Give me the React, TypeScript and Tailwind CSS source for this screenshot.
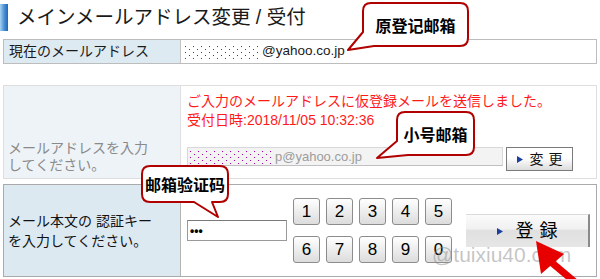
import React from "react";

const dotBg =
  "bg-[image:conic-gradient(from_270deg_at_1px_1px,#a800a8_90deg,transparent_0),conic-gradient(from_270deg_at_1px_1px,#a800a8_90deg,transparent_0)] bg-[size:8px_6px] bg-[position:1px_1px,5px_4px]";

function Tri() {
  return (
    <svg width="6" height="7" viewBox="0 0 6 7" className="shrink-0">
      <path d="M0 0 L6 3.5 L0 7 Z" fill="#1a3fa0" />
    </svg>
  );
}

export default function App() {
  const keys = ["1", "2", "3", "4", "5", "6", "7", "8", "9", "0"];
  return (
    <div className="relative w-[600px] h-[279px] overflow-hidden bg-white text-[#222] font-['Liberation_Sans','Noto_Sans_CJK_JP',sans-serif]">
      {/* Title */}
      <div className="flex items-center h-[34px]">
        <div className="w-[8px] h-[27px] mt-[1px] bg-linear-to-r from-[#a8d2f2] via-[#4a94d8] to-[#1f66b8]" />
        <h1 className="ml-[9px] mt-[2px] text-[19.5px] leading-none text-[#1a1a1a] font-normal">
          メインメールアドレス変更 / 受付
        </h1>
      </div>

      {/* Row 1 */}
      <div className="mx-[3px] mt-[5px] h-[25px] flex border border-[#bdbdbd]">
        <div className="w-[177px] bg-[#deeaf1] border-r border-[#c4c4c4] flex items-center pl-[5px] text-[14px] text-[#1a1a1a]">
          現在のメールアドレス
        </div>
        <div className="flex-1 flex items-center pl-[3px]">
          <div className={`w-[74px] h-[14px] ${dotBg}`} />
          <span className="ml-[4px] text-[13.5px] text-[#1a1a1a]">@yahoo.co.jp</span>
        </div>
      </div>

      {/* Row 2 */}
      <div className="mx-[3px] mt-[21px] h-[94px] flex border border-[#dedede]">
        <div className="w-[177px] bg-[#eef3f7] border-r border-[#e0e0e0] pl-[4px] pt-[54px] text-[14px] leading-[17px] text-[#8a8a8a]">
          <div>メールアドレスを入力</div>
          <div>してください。</div>
        </div>
        <div className="flex-1 pl-[6px] pt-[6px]">
          <div className="text-[14px] leading-[19px] text-[#ff1a1a]">
            <div>ご入力のメールアドレスに仮登録メールを送信しました。</div>
            <div>受付日時:2018/11/05 10:32:36</div>
          </div>
          <div className="flex items-start mt-[17px]">
            <div className="w-[316px] h-[19px] bg-[#f3f3f3] border border-[#d8d8d8] border-b-[#c0c0c0] flex items-center pl-[1px]">
              <div className={`w-[84px] h-[14px] ${dotBg}`} />
              <span className="ml-[2px] text-[13px] text-[#9c9c9c]">p@yahoo.co.jp</span>
            </div>
            <button className="ml-[3px] w-[67px] h-[24px] border border-[#7a7a7a] bg-linear-to-b from-white from-45% to-[#dcdcdc] flex items-center justify-center gap-[5px] text-[14px] text-[#111]">
              <Tri />
              <span className="ml-[2px]">変</span>
              <span>更</span>
            </button>
          </div>
        </div>
      </div>

      {/* Row 3 */}
      <div className="mx-[3px] mt-[5px] h-[93px] flex border border-[#aaaaaa]">
        <div className="w-[177px] bg-[#dde9f1] border-r border-[#b4b4b4] flex items-center pl-[4px] text-[14px] leading-[20px] text-[#111]">
          <div>
            <div>メール本文の 認証キー</div>
            <div>を入力してください。</div>
          </div>
        </div>
        <div className="flex-1 flex items-center pl-[6px]">
          <div className="w-[100px] h-[21px] border border-[#9a9a9a] border-t-[#7a7a7a] bg-white flex items-center pl-[2px] text-[12px] font-bold tracking-[0px] text-black font-['Liberation_Sans',sans-serif]">
            •••
          </div>
          <div className="ml-[6px] grid grid-cols-5 gap-x-[6px] gap-y-[11px]">
            {keys.map((k) => (
              <button
                key={k}
                className="w-[27px] h-[27px] border border-[#8c8c8c] rounded-[3px] bg-linear-to-b from-white to-[#dcdcdc] flex items-center justify-center text-[17px] text-black"
              >
                {k}
              </button>
            ))}
          </div>
          <button className="ml-[14px] w-[124px] h-[33px] border-t border-[#dadada] border-r-2 border-r-[#8a8a8a] bg-[linear-gradient(to_bottom,#fbfbfb_0%,#f0f0f0_45%,#e0e0e0_46%,#e6e6e6_100%)] flex items-center justify-center gap-[6px] text-[18px] text-black">
            <Tri />
            <span className="ml-[7px]">登</span>
            <span>録</span>
          </button>
        </div>
      </div>

      {/* Watermark */}
      <div className="absolute left-[432px] top-[244px] text-[21px] leading-none text-[rgba(140,140,140,0.5)] font-['Liberation_Sans',sans-serif]">
        @tuixiu40.com
      </div>

      {/* Overlay drawings: callouts and arrow */}
      <svg
        className="absolute inset-0 pointer-events-none"
        width="600"
        height="279"
        viewBox="0 0 600 279"
      >
        <path
          d="M371 3 H460 Q468 3 468 11 V38 Q468 46 460 46 H374 L348 50 L363 32 V11 Q363 3 371 3 Z"
          fill="white"
          stroke="#b00000"
          strokeWidth="2"
          strokeLinejoin="round"
        />
        <path
          d="M405 112 H466 Q474 112 474 120 V147 Q474 155 466 155 H408 L377 158 L397 141 V120 Q397 112 405 112 Z"
          fill="white"
          stroke="#b00000"
          strokeWidth="2"
          strokeLinejoin="round"
        />
        <path
          d="M150 166 H220 Q228 166 228 174 V194 Q228 202 220 202 H212 L218 217 L194 202 H150 Q142 202 142 194 V174 Q142 166 150 166 Z"
          fill="white"
          stroke="#b00000"
          strokeWidth="2"
          strokeLinejoin="round"
        />
        <line x1="551" y1="262" x2="582" y2="288" stroke="#e60000" strokeWidth="7" />
        <path d="M536 241 L541 274 L564 254 Z" fill="#e60000" />
      </svg>

      <div className="absolute left-[363px] top-[3px] w-[105px] h-[43px] flex items-center justify-center text-[16px] font-bold text-black font-['Noto_Sans_CJK_SC',sans-serif]">
        原登记邮箱
      </div>
      <div className="absolute left-[397px] top-[112px] w-[77px] h-[43px] flex items-center justify-center text-[16px] font-bold text-black font-['Noto_Sans_CJK_SC',sans-serif]">
        小号邮箱
      </div>
      <div className="absolute left-[142px] top-[166px] w-[86px] h-[36px] flex items-center justify-center text-[16px] font-bold text-black font-['Noto_Sans_CJK_SC',sans-serif]">
        邮箱验证码
      </div>
    </div>
  );
}
